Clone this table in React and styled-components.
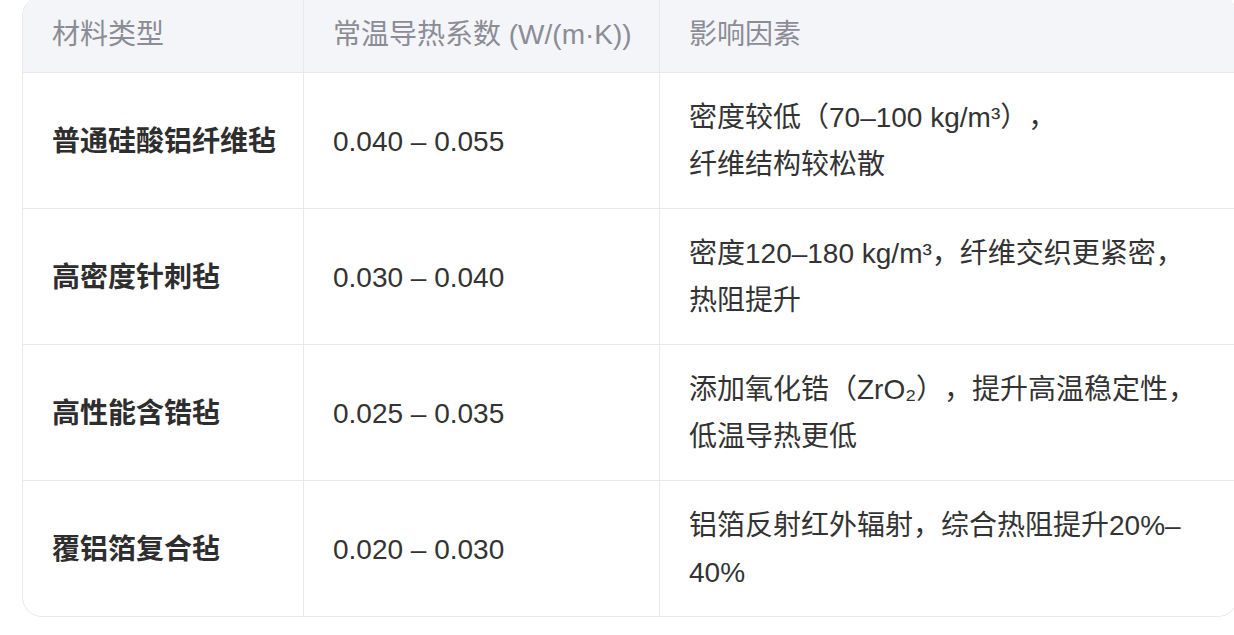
import React from "react";
import styled, { createGlobalStyle } from "styled-components";

const GlobalStyle = createGlobalStyle`
  html, body {
    margin: 0;
    padding: 0;
    background: #ffffff;
    overflow: hidden;
  }
  body {
    font-family: "Liberation Sans", "Noto Sans CJK SC", sans-serif;
    text-spacing-trim: space-all;
  }
  * { box-sizing: border-box; }
`;

const Page = styled.div`
  padding: 0 0 0 22px;
  margin-top: -4px;
  width: 1260px;
`;

const Table = styled.table`
  width: 1216px;
  table-layout: fixed;
  border-collapse: separate;
  border-spacing: 0;
  border: 1px solid #e9e9ec;
  border-radius: 20px;
  overflow: hidden;
  font-size: 28px;
  line-height: 47px;
  color: #333333;
  text-spacing-trim: space-all;
`;

const HeadCell = styled.th`
  background: #f4f5f9;
  color: #8b8c95;
  font-weight: 400;
  text-align: left;
  padding: 14px 28px 14px 29px;
  border-bottom: 1px solid #e9e9ec;
  border-right: ${(p) => (p.$last ? "none" : "1px solid #e9e9ec")};
  white-space: nowrap;
`;

const Cell = styled.td`
  padding: 21px 28px 20px 29px;
  vertical-align: middle;
  border-bottom: ${(p) => (p.$lastRow ? "none" : "1px solid #e9e9ec")};
  border-right: ${(p) => (p.$last ? "none" : "1px solid #e9e9ec")};
  font-weight: ${(p) => (p.$strong ? 700 : 400)};
  color: ${(p) => (p.$strong ? "#2e2e2e" : "#333333")};
  white-space: nowrap;
`;

const columns = ["材料类型", "常温导热系数 (W/(m·K))", "影响因素"];

const rows = [
  {
    name: "普通硅酸铝纤维毡",
    k: "0.040 – 0.055",
    factors: ["密度较低（70–100 kg/m³），", "纤维结构较松散"],
  },
  {
    name: "高密度针刺毡",
    k: "0.030 – 0.040",
    factors: ["密度120–180 kg/m³，纤维交织更紧密，", "热阻提升"],
  },
  {
    name: "高性能含锆毡",
    k: "0.025 – 0.035",
    factors: ["添加氧化锆（ZrO₂），提升高温稳定性，", "低温导热更低"],
  },
  {
    name: "覆铝箔复合毡",
    k: "0.020 – 0.030",
    factors: ["铝箔反射红外辐射，综合热阻提升20%–", "40%"],
  },
];

export default function App() {
  return (
    <>
      <GlobalStyle />
      <Page>
        <Table>
          <colgroup>
            <col style={{ width: 281 }} />
            <col style={{ width: 356 }} />
            <col />
          </colgroup>
          <thead>
            <tr>
              {columns.map((c, i) => (
                <HeadCell key={c} $last={i === columns.length - 1}>
                  {c}
                </HeadCell>
              ))}
            </tr>
          </thead>
          <tbody>
            {rows.map((r, i) => {
              const lastRow = i === rows.length - 1;
              return (
                <tr key={r.name}>
                  <Cell $strong $lastRow={lastRow}>{r.name}</Cell>
                  <Cell $lastRow={lastRow}>{r.k}</Cell>
                  <Cell $last $lastRow={lastRow}>
                    {r.factors.map((line, j) => (
                      <React.Fragment key={j}>
                        {j > 0 && <br />}
                        {line}
                      </React.Fragment>
                    ))}
                  </Cell>
                </tr>
              );
            })}
          </tbody>
        </Table>
      </Page>
    </>
  );
}
